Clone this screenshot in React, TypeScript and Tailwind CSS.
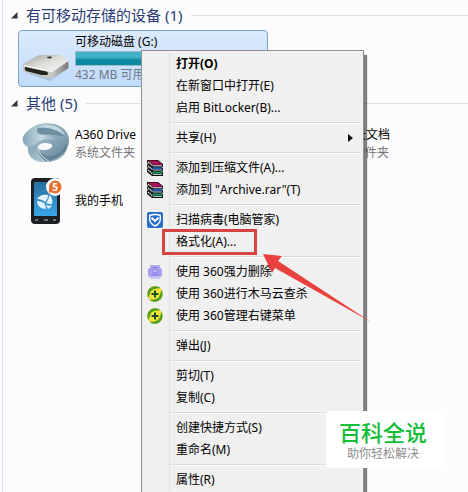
import React from "react";

const RarIcon = () => (
  <svg width="18" height="16" viewBox="0 0 18 16" aria-hidden="true">
    <path d="M1 0h11l5 4v2.500l-1 1 1 1v2l-1 1 1 1V16H6L1 12V9l1-1-1-1V5l1-1-1-1z" fill="#111" />
    <path d="M2 .8h9.500L16 4H6.500z" fill="#b0125e" />
    <path d="M2 2l4.500 3.400M2 6l4.500 3.400M2 10l4.500 3.800" stroke="#f0f0f0" strokeWidth="1.300" strokeDasharray="1.500 .6" />
    <path d="M6.500 4.300H16" stroke="#8f1450" strokeWidth="1.200" />
    <path d="M7 5.800h9" stroke="#f3e3ea" />
    <path d="M6.500 8.200H16" stroke="#1d55c0" strokeWidth="2" />
    <path d="M7 10h9" stroke="#cfe0f0" strokeWidth=".9" />
    <path d="M6.500 12.500H16" stroke="#12925e" strokeWidth="2" />
    <path d="M7 14.400h9" stroke="#d5efe2" strokeWidth=".9" />
  </svg>
);

const ShieldIcon = () => (
  <svg width="16" height="16" viewBox="0 0 16 16" aria-hidden="true">
    <rect width="16" height="16" rx="2" fill="#2a70c8" />
    <path
      d="M8 2.500c2 0 3.800.3 5.300 1v3.500c0 3.400-2.300 5.600-5.300 7-3-1.400-5.300-3.600-5.300-7V3.500C4.200 2.800 6 2.500 8 2.500z"
      fill="#2a70c8"
      stroke="#fff"
      strokeWidth="1.400"
    />
    <path d="M4.500 5.800L8 9l3.500-3.200" fill="none" stroke="#fff" strokeWidth="2" />
  </svg>
);

const ShredIcon = () => (
  <svg width="16" height="16" viewBox="0 0 16 16" aria-hidden="true">
    <rect x="3" y="1" width="10" height="6" rx="1" fill="#b1abf2" />
    <rect x="1" y="4" width="14" height="9" rx="2" fill="#a7a0f2" />
    <path d="M2 12.500h12l-1 2.500H3z" fill="#cbc8f8" />
    <path d="M5 3.500h6M4 10.500h8" stroke="#8a83e2" />
    <path d="M6 8.500V7a2 2 0 0 1 4 0v1.500z" fill="#c5c1f8" stroke="#857ee0" strokeWidth=".8" />
  </svg>
);

const PlusIcon = () => (
  <svg width="16" height="16" viewBox="0 0 16 16" aria-hidden="true">
    <circle cx="8" cy="8" r="7.800" fill="#f4dc2a" />
    <path d="M1.500 12.300C-.8 8 .5 1.500 7 .3c3-.4 5.500.7 6.500 2C8 1.500 3 4.500 1.500 12.300z" fill="#4f9f24" />
    <path d="M14.500 3.700C16.800 8 15.500 14.500 9 15.700c-3 .4-5.500-.7-6.500-2 5.500.8 10.500-2.200 12-10z" fill="#4f9f24" />
    <circle cx="8" cy="8" r="4.800" fill="#f6ea3c" />
    <path d="M8 4.500v7M4.500 8h7" stroke="#164f2c" strokeWidth="2" />
  </svg>
);

const DriveIcon = () => (
  <svg width="48" height="48" viewBox="0 0 48 48" aria-hidden="true">
    <defs>
      <linearGradient id="driveTop" x1="0" y1="0" x2="1" y2="1">
        <stop offset="0" stopColor="#9b9b97" />
        <stop offset=".5" stopColor="#dededb" />
        <stop offset="1" stopColor="#f4f4f2" />
      </linearGradient>
      <linearGradient id="driveSide" x1="0" y1="0" x2="1" y2="0">
        <stop offset="0" stopColor="#d2d2d0" />
        <stop offset="1" stopColor="#777775" />
      </linearGradient>
    </defs>
    <path d="M3 38l25 8 19-13-2-2-16 10z" fill="#6f8cab" opacity=".35" />
    <path d="M1 31q-1-1.500 1-2.500L15 21q2-1 4-1h18q2 0 3 .8l5 3.200q1.500 1 0 2L30 36z" fill="url(#driveTop)" />
    <path d="M46 25l.5 7q0 1-1 1.700L30 43.500l-2-.5 1-7z" fill="url(#driveSide)" />
    <path d="M1 30l28 6-.5 7.500h-2L3 37q-1.500-.5-2-2.500z" fill="#c4c4c2" />
    <path d="M3 32l21.500 4.500q1.500.5 1.500 2t-1.500 1.500h-5L4 36q-2-1.500-1-4z" fill="#22221f" />
    <path d="M2 30.500l27.500 6L46 25.500" fill="none" stroke="#fafafa" strokeWidth="1.200" />
    <ellipse cx="27.500" cy="22.500" rx="2.500" ry="1" fill="#3a3a38" />
  </svg>
);

const SwirlIcon = () => (
  <svg width="48" height="48" viewBox="0 0 48 48" aria-hidden="true">
    <defs>
      <linearGradient id="swirlBack" x1="0" y1="0" x2="1" y2="1">
        <stop offset="0" stopColor="#b4ccd8" />
        <stop offset=".55" stopColor="#88a8b8" />
        <stop offset="1" stopColor="#5d7f93" />
      </linearGradient>
      <linearGradient id="swirlBand" x1="0" y1="0" x2="1" y2="0">
        <stop offset="0" stopColor="#86a6b6" />
        <stop offset=".5" stopColor="#c5d9e2" />
        <stop offset="1" stopColor="#7b9bac" />
      </linearGradient>
      <linearGradient id="swirlFoot" x1="0" y1="0" x2="1" y2="1">
        <stop offset="0" stopColor="#7f9fb0" />
        <stop offset="1" stopColor="#b9d0db" />
      </linearGradient>
    </defs>
    <path
      d="M5 12C12 3 24 2 33 4c9 3 14 9 14 16 0 11-10 20-24 22C12 42 5 36 6 27c-5-2-8-8-1-15zm11 15c0 3 4 3 8 3 4-1 7-3 6-5-2-3-13-3-14 2z"
      fill="url(#swirlBack)"
      fillRule="evenodd"
    />
    <path d="M1 17C4 11 9 8 15 8c-2 4 0 6 4 7 8 0 16 0 19 8-8-5-19-5-24 1-3 2-6 3-8 3-4-2-6-6-5-10z" fill="url(#swirlBand)" />
    <path d="M16 8C22 2 38 4 43 15c-7-5-18-8-27-7z" fill="#c3d7e0" />
    <path d="M16 8c8-1 20 1 26 8-3 0-6-1-9-1-6-1-13 0-17-2-1-2-1-3 0-5z" fill="#6d8fa2" />
    <path d="M6 27c3 0 6-2 10-3-1 7 2 14 9 18C13 43 5 37 6 27z" fill="url(#swirlFoot)" />
    <path d="M16 27c1 7 8 11 17 8 6-2 10-7 11-12 4 9-5 18-18 19-7-3-11-9-10-15z" fill="#54768b" opacity=".55" />
    <path d="M16 26c0 6 4 12 11 15" fill="none" stroke="#dbe8ee" />
  </svg>
);

const PhoneIcon = () => (
  <svg width="48" height="48" viewBox="0 0 48 48" aria-hidden="true">
    <defs>
      <linearGradient id="screen" x1="0" y1="0" x2="0" y2="1">
        <stop offset="0" stopColor="#2b6f9f" />
        <stop offset="1" stopColor="#38a6e8" />
      </linearGradient>
    </defs>
    <rect x="9" y="1" width="29" height="46" rx="4" fill="#1c1f24" />
    <rect x="12" y="5" width="23" height="34" fill="url(#screen)" />
    <path d="M13 43h3M22 43h4M31 43h3" stroke="#8b9097" strokeWidth="1.500" />
    <g fill="#e4f4fe">
      <path d="M15 22c2-4 8-5 11-4 0 3-1 5-3 7-2-2-5-3-8-3z" />
      <path d="M27 18c3 2 4 6 3 9-2 0-4 0-6-1 2-2 3-5 3-8z" />
      <path d="M15 24c3 0 6 1 8 3l1 5c-5 0-9-3-9-8z" />
      <path d="M24 28c2 1 4 1 6 0-1 2-2 3-4 4z" />
    </g>
    <circle cx="33" cy="10" r="9" fill="#fff" />
    <path d="M33 3.500a6.500 6.500 0 1 1-4 11.600L27 17v-6.500a6.500 6.500 0 0 1 6-7z" fill="#e96f2a" />
    <text x="33" y="14" textAnchor="middle" fontSize="10" fontWeight="700" fill="#fff">5</text>
  </svg>
);

type Entry = { label: string; icon?: React.ReactNode; bold?: boolean; submenu?: boolean };

const groups: Entry[][] = [
  [{ label: "打开(O)", bold: true }, { label: "在新窗口中打开(E)" }, { label: "启用 BitLocker(B)..." }],
  [{ label: "共享(H)", submenu: true }],
  [
    { label: "添加到压缩文件(A)...", icon: <RarIcon /> },
    { label: '添加到 "Archive.rar"(T)', icon: <RarIcon /> },
  ],
  [{ label: "扫描病毒(电脑管家)", icon: <ShieldIcon /> }, { label: "格式化(A)..." }],
  [
    { label: "使用 360强力删除", icon: <ShredIcon /> },
    { label: "使用 360进行木马云查杀", icon: <PlusIcon /> },
    { label: "使用 360管理右键菜单", icon: <PlusIcon /> },
  ],
  [{ label: "弹出(J)" }],
  [{ label: "剪切(T)" }, { label: "复制(C)" }],
  [{ label: "创建快捷方式(S)" }, { label: "重命名(M)" }],
  [{ label: "属性(R)" }],
];

function SectionHeader({ title, count }: { title: string; count: number }) {
  return (
    <h2 className="flex h-6 items-center text-[15px] leading-6 text-[#2b3c78]">
      <svg className="mr-2 shrink-0" width="7" height="7" viewBox="0 0 7 7" aria-hidden="true">
        <path d="M6.500 0v6.500H0z" fill="#333" />
      </svg>
      <span className="whitespace-nowrap">
        {title} ({count})
      </span>
      <span className="ml-2 h-px flex-1 bg-[#dcdfe2]" />
    </h2>
  );
}

function Tile({ icon, name, detail }: { icon?: React.ReactNode; name: string; detail?: string }) {
  return (
    <div className="flex h-[57px] items-center gap-[5px] pl-1 text-xs leading-[18px]">
      <div className="size-12 shrink-0">{icon}</div>
      <div className="whitespace-nowrap">
        <div className="text-black">{name}</div>
        {detail && <div className="text-[#777]">{detail}</div>}
      </div>
    </div>
  );
}

function ContextMenu() {
  return (
    <div
      role="menu"
      className="absolute left-[141px] top-[50px] w-[223px] border border-[#8f9196] bg-[#f0f0f0] py-0.5 shadow-[3px_5px_1px_rgba(0,0,0,0.5)]"
    >
      {groups.map((group, i) => (
        <div key={i}>
          {i > 0 && (
            <div role="separator" className="flex h-2 items-center">
              <div className="h-full w-7 border-r border-[#e0e0e0]" />
              <div className="mr-[3px] h-0.5 flex-1 border-b border-t border-b-white border-t-[#dcdcdc]" />
            </div>
          )}
          {group.map((item) => (
            <button
              key={item.label}
              role="menuitem"
              type="button"
              className="flex h-[22px] w-full items-center whitespace-nowrap text-left text-xs text-black"
            >
              <span className="flex h-full w-7 shrink-0 items-center justify-center border-r border-[#e0e0e0] pr-0.5">
                {item.icon}
              </span>
              <span className={item.bold ? "flex-1 pl-1.5 font-bold" : "flex-1 pl-1.5"}>{item.label}</span>
              {item.submenu && (
                <svg className="mr-2.5" width="5" height="8" viewBox="0 0 5 8" aria-hidden="true">
                  <path d="M0 0l5 4-5 4z" fill="#111" />
                </svg>
              )}
            </button>
          ))}
        </div>
      ))}
    </div>
  );
}

export default function App() {
  return (
    <main className="relative h-screen overflow-hidden bg-[#fcfcfc] pl-0.5 font-['Noto_Sans','Noto_Sans_CJK_SC',sans-serif]">
      <div className="h-full border-l border-[#d5e0f0] pl-2 pt-[3px]">
        <section>
          <SectionHeader title="有可移动存储的设备" count={1} />
          <div className="ml-[7px] mt-[3px] flex h-[57px] w-[250px] items-center gap-[5px] rounded-sm border border-[#7da2ce] bg-linear-to-b from-[#dcebfc] to-[#c1dbfc] pl-[3px] text-xs">
            <div className="size-12 shrink-0">
              <DriveIcon />
            </div>
            <div className="flex-1 pr-2">
              <div className="leading-[18px] text-black">可移动磁盘 (G:)</div>
              <div className="h-[15px] border border-[#9fb9c4] bg-linear-to-b from-[#3fb4c8] from-40% to-[#0b8aa5] to-60%" />
              <div className="leading-[18px] text-[#6d7883]">432 MB 可用</div>
            </div>
          </div>
        </section>
        <section className="mt-1">
          <SectionHeader title="其他" count={5} />
          <div className="ml-[7px] grid grid-cols-[250px_250px] gap-x-1">
            <Tile icon={<SwirlIcon />} name="A360 Drive" detail="系统文件夹" />
            <Tile name="WPS云文档" detail="系统文件夹" />
            <Tile icon={<PhoneIcon />} name="我的手机" />
          </div>
        </section>
      </div>

      <ContextMenu />

      <div className="pointer-events-none absolute left-[162px] top-[229px] h-[26px] w-[95px] border-3 border-[#d64543]" />
      <svg
        className="pointer-events-none absolute left-[262px] top-[253px]"
        width="112"
        height="72"
        viewBox="0 0 112 72"
        aria-hidden="true"
      >
        <path d="M1 1l19 2-4 5 93 61L13 15l-3 5z" fill="#e8413e" />
      </svg>

      <aside className="absolute bottom-6 right-6 flex h-[57px] w-[118px] flex-col items-center justify-center rounded-sm bg-white pr-1 pt-0.5">
        <div className="text-[22px] font-medium leading-[26px] text-[#12bd38]">百科全说</div>
        <div className="text-xs leading-[18px] text-[#8c8c8c]">助你轻松解决</div>
      </aside>
    </main>
  );
}
